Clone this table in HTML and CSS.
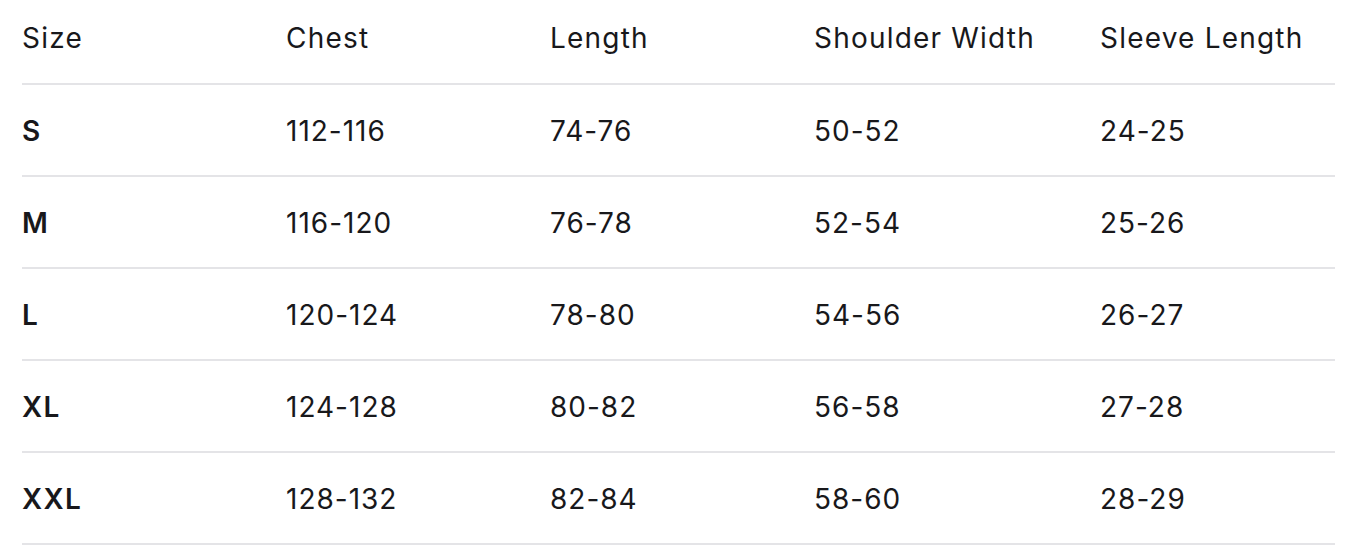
FILE: index.html
```html
<!DOCTYPE html>
<html lang="en">
<head>
<meta charset="utf-8">
<title>Size Chart</title>
<link rel="stylesheet" href="styles.css">
</head>
<body>
<div class="wrap">
<table class="chart">
  <colgroup>
    <col class="c1"><col class="c2"><col class="c3"><col class="c4"><col class="c5">
  </colgroup>
  <thead>
    <tr><th>Size</th><th>Chest</th><th>Length</th><th>Shoulder Width</th><th>Sleeve Length</th></tr>
  </thead>
  <tbody>
    <tr><td class="size">S</td><td>112-116</td><td>74-76</td><td>50-52</td><td>24-25</td></tr>
    <tr><td class="size">M</td><td>116-120</td><td>76-78</td><td>52-54</td><td>25-26</td></tr>
    <tr><td class="size">L</td><td>120-124</td><td>78-80</td><td>54-56</td><td>26-27</td></tr>
    <tr><td class="size">XL</td><td>124-128</td><td>80-82</td><td>56-58</td><td>27-28</td></tr>
    <tr><td class="size">XXL</td><td>128-132</td><td>82-84</td><td>58-60</td><td>28-29</td></tr>
  </tbody>
</table>
</div>
</body>
</html>
```
FILE: styles.css
```css
html, body {
  margin: 0;
  padding: 0;
  background: #ffffff;
}
.wrap {
  padding-left: 22px;
}
.chart {
  border-collapse: collapse;
  table-layout: fixed;
  width: 1313px;
  font-family: Inter, "Noto Sans", sans-serif;
  font-size: 28px;
  line-height: 40px;
  color: #18181b;
}
.c1 { width: 264px; }
.c2 { width: 264px; }
.c3 { width: 264px; }
.c4 { width: 286px; }
.c5 { width: 235px; }
.chart th {
  text-align: left;
  font-weight: 400;
  letter-spacing: 1.2px;
  padding: 18px 0 25px 0;
  border-bottom: 2px solid #e4e4e7;
  white-space: nowrap;
}
.chart td {
  text-align: left;
  letter-spacing: 1px;
  padding: 26px 0 24px 0;
  border-bottom: 2px solid #e4e4e7;
  white-space: nowrap;
}
.chart td.size {
  font-weight: 600;
  letter-spacing: 1.3px;
}
```
